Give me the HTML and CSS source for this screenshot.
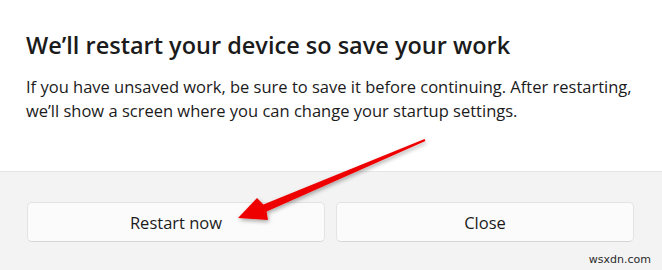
FILE: index.html
```html
<!DOCTYPE html>
<html>
<head>
<meta charset="utf-8">
<link rel="stylesheet" href="styles.css">
</head>
<body>
<div class="dialog">
  <div class="content">
    <h1 class="title">We’ll restart your device so save your work</h1>
    <p class="text">If you have unsaved work, be sure to save it before continuing. After restarting, we’ll show a screen where you can change your startup settings.</p>
  </div>
  <div class="footer">
    <div class="buttons">
      <button class="btn">Restart now</button>
      <button class="btn">Close</button>
    </div>
    <div class="watermark">wsxdn.com</div>
  </div>
  <svg class="arrow" width="662" height="270" viewBox="0 0 662 270">
    <defs>
      <filter id="sh" x="-20%" y="-20%" width="140%" height="140%">
        <feGaussianBlur in="SourceAlpha" stdDeviation="2"/>
        <feOffset dx="1" dy="2" result="b"/>
        <feComponentTransfer><feFuncA type="linear" slope="0.35"/></feComponentTransfer>
        <feMerge><feMergeNode/><feMergeNode in="SourceGraphic"/></feMerge>
      </filter>
    </defs>
    <polygon filter="url(#sh)" fill="#ee0000" points="424.6,139.1 425.4,140.9 266.6,211.5 268,220 238,218 257,198 263.4,204.6"/>
  </svg>
</div>
</body>
</html>
```

FILE: styles.css
```css
html, body {
  margin: 0;
  padding: 0;
  background: #ffffff;
}
.dialog {
  position: relative;
  width: 662px;
  height: 270px;
  overflow: hidden;
  font-family: "Open Sans", "Noto Sans", sans-serif;
  color: #1b1b1b;
}
.content {
  height: 171px;
  box-sizing: border-box;
  padding: 29px 16px 0 26px;
  background: #ffffff;
}
.title {
  margin: 0;
  font-size: 23.5px;
  font-weight: 600;
  line-height: 32px;
  letter-spacing: 0;
}
.text {
  margin: 14px 0 0 0;
  font-size: 16.5px;
  line-height: 24px;
  letter-spacing: 0;
}
.footer {
  height: 99px;
  box-sizing: border-box;
  border-top: 1px solid #e5e5e5;
  background: #f3f3f3;
  display: flex;
  flex-direction: column;
  padding: 30px 28px 0 27px;
}
.buttons {
  display: flex;
  gap: 11px;
}
.btn {
  flex: 1;
  height: 40px;
  background: #fbfbfb;
  border: 1px solid #e3e3e3;
  border-bottom-color: #d6d6d6;
  border-radius: 5px;
  font-family: "Open Sans", "Noto Sans", sans-serif;
  font-size: 16.5px;
  color: #1b1b1b;
  padding: 0;
}
.watermark {
  align-self: flex-end;
  margin: 11px -17px 0 0;
  font-family: "DejaVu Sans", sans-serif;
  font-size: 11px;
  color: #2a2a2a;
}
.arrow {
  position: absolute;
  left: 0;
  top: 0;
  pointer-events: none;
}
```
